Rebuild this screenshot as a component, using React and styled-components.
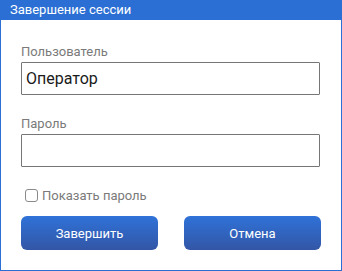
import React from "react";
import styled, { createGlobalStyle } from "styled-components";

const Global = createGlobalStyle`
  html, body { margin: 0; padding: 0; background: #ffffff; }
  body { font-family: Roboto, "Liberation Sans", sans-serif; }
`;

const Window = styled.div`
  box-sizing: border-box;
  width: 342px;
  height: 271px;
  border: 1px solid #2b6fd4;
  border-top: none;
  background: #ffffff;
  display: flex;
  flex-direction: column;
`;

const TitleBar = styled.div`
  height: 20px;
  margin: 0 -1px;
  background: #2b6fd4;
  color: #ffffff;
  font-size: 13px;
  line-height: 20px;
  padding-left: 10px;
`;

const Body = styled.div`
  padding: 24px 20px 0 20px;
  display: flex;
  flex-direction: column;
`;

const Field = styled.div`
  display: flex;
  flex-direction: column;
  margin-bottom: ${({ last }) => (last ? "20px" : "21px")};
`;

const Label = styled.label`
  font-size: 13px;
  line-height: 16px;
  color: #7a7a7a;
  margin-bottom: 2px;
`;

const Input = styled.input`
  box-sizing: border-box;
  width: 299px;
  height: 33px;
  border: 1px solid #767676;
  border-radius: 1px;
  padding: 0 7px 0 4px;
  font-family: Roboto, "Liberation Sans", sans-serif;
  font-size: 16px;
  color: #1a1a1a;
  outline: none;
`;

const CheckRow = styled.label`
  display: flex;
  align-items: center;
  gap: 4px;
  height: 16px;
  padding-left: 4px;
  font-size: 13px;
  color: #7a7a7a;
`;

const Box = styled.span`
  box-sizing: border-box;
  width: 13px;
  height: 13px;
  border: 1px solid #8a8a8a;
  border-radius: 3px;
  background: #ffffff;
`;

const Buttons = styled.div`
  display: flex;
  justify-content: space-between;
  width: 300px;
  margin-top: 13px;
`;

const Button = styled.button`
  width: 137px;
  height: 34px;
  border: none;
  border-radius: 6px;
  background: linear-gradient(#2f72d8, #3356a6);
  color: #ffffff;
  font-family: Roboto, "Liberation Sans", sans-serif;
  font-size: 13px;
  cursor: pointer;
`;

export default function App() {
  return (
    <>
      <Global />
      <Window>
        <TitleBar>Завершение сессии</TitleBar>
        <Body>
          <Field>
            <Label>Пользователь</Label>
            <Input defaultValue="Оператор" />
          </Field>
          <Field last>
            <Label>Пароль</Label>
            <Input type="password" />
          </Field>
          <CheckRow>
            <Box />
            Показать пароль
          </CheckRow>
          <Buttons>
            <Button>Завершить</Button>
            <Button>Отмена</Button>
          </Buttons>
        </Body>
      </Window>
    </>
  );
}
